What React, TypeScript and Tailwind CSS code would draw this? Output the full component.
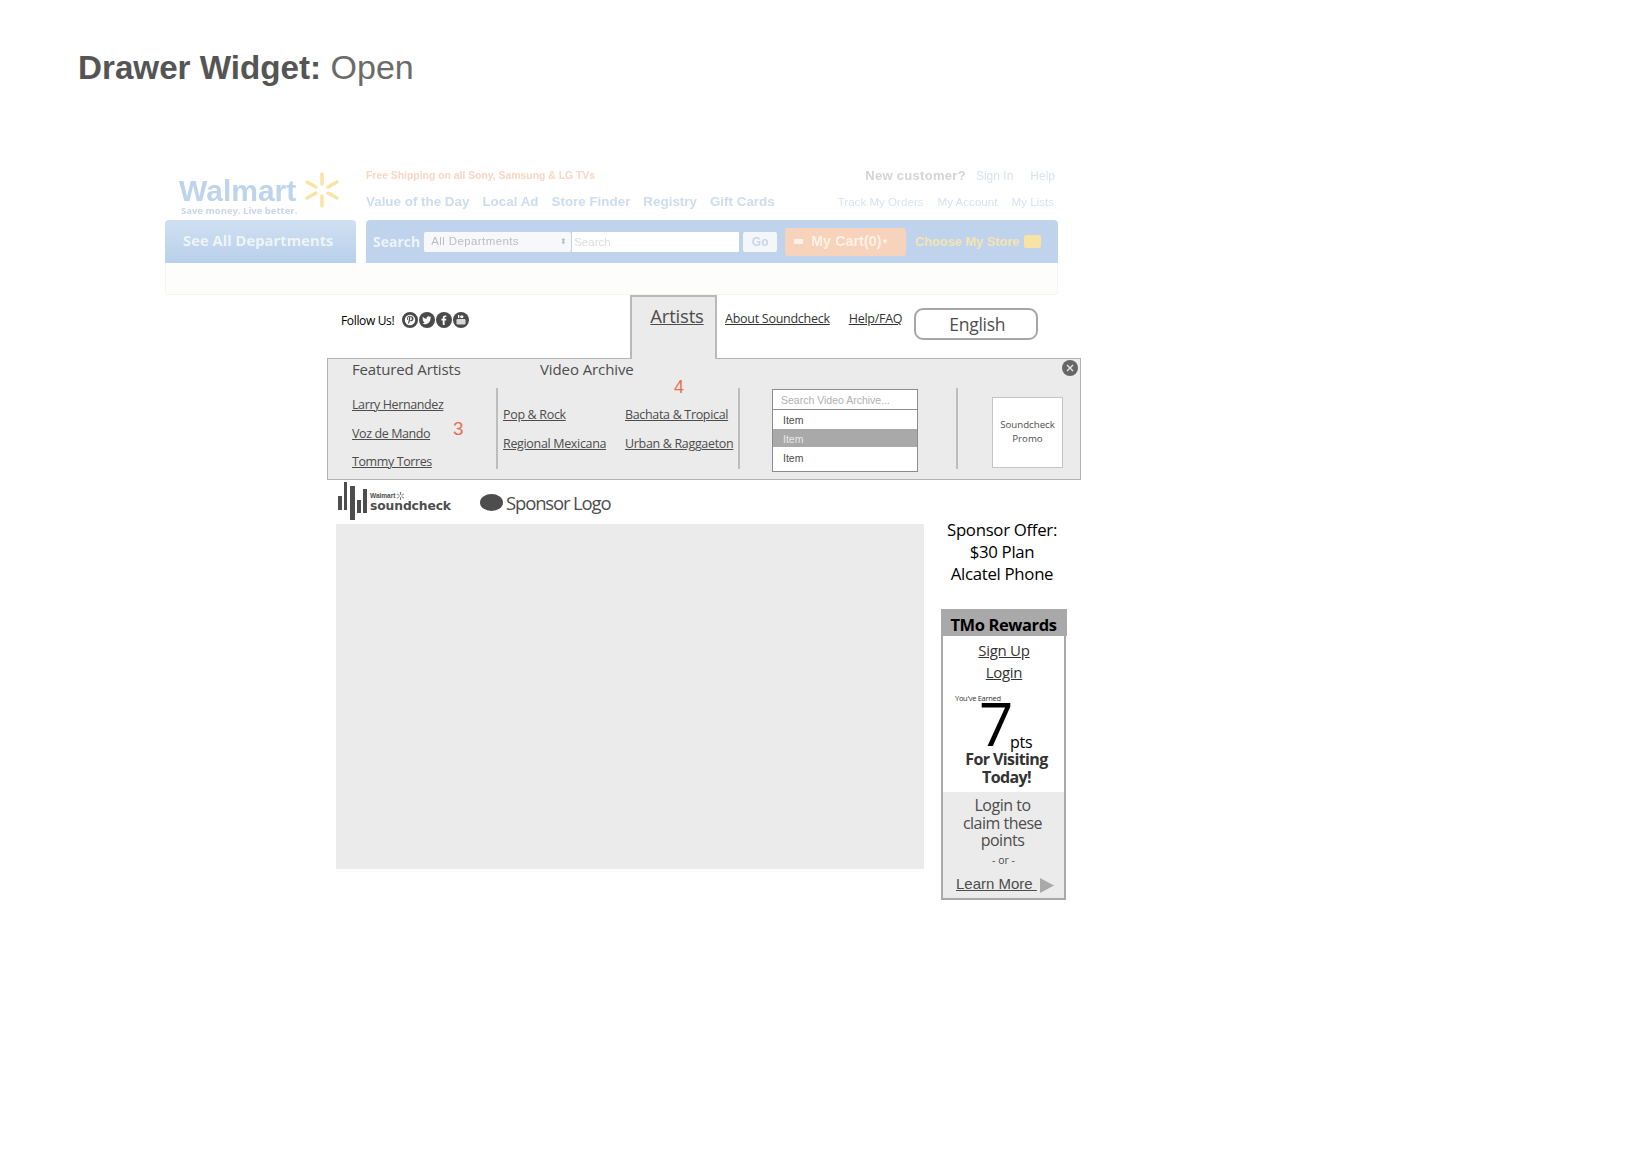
import React from 'react';

const myriad = "font-['Open_Sans',sans-serif]";

function WalmartHeader() {
  return (
    <div className="w-[895px] h-[130px] ml-[165px] font-['Liberation_Sans',sans-serif] blur-[0.6px]">
      <div className="flex h-[55px]">
        <div className="w-[201px] pl-[14px] pt-[7px] flex">
          <div className="w-[125px]">
            <div className="mt-[2px] text-[30px] leading-[33px] font-bold text-[#bdd4ec]">Walmart</div>
            <div className="text-[9.5px] leading-[8px] font-bold text-[#c9d7e6] ml-[2px] whitespace-nowrap font-['Open_Sans',sans-serif]">Save money. Live better.</div>
          </div>
          <svg className="mt-[0px]" width="36" height="36" viewBox="0 0 36 36">
            <g stroke="#f9e3a5" strokeWidth="3.5" strokeLinecap="round">
              <path d="M18 2v10" />
              <path d="M18 24v10" />
              <path d="M3 10l9 5" />
              <path d="M33 10l-9 5" />
              <path d="M3 26l9-5" />
              <path d="M33 26l-9-5" />
            </g>
          </svg>
        </div>
        <div className="flex-1">
          <div className="flex justify-between h-[22px] items-center pr-[5px]">
            <span className="text-[10.4px] font-bold text-[#fad6c3]">Free Shipping on all Sony, Samsung &amp; LG TVs</span>
            <div className="flex items-center text-[12px] text-[#d8e3ef] gap-[10px]">
              <span className="text-[13px] font-bold text-[#d4d4d4] tracking-[0.3px]">New customer?</span>
              <span>Sign In</span>
              <span className="ml-[7px]">Help</span>
            </div>
          </div>
          <div className="flex justify-between h-[30px] items-center pr-[6px]">
            <div className="flex gap-[13px] text-[13.4px] font-bold text-[#cddcee]">
              <span>Value of the Day</span>
              <span>Local Ad</span>
              <span>Store Finder</span>
              <span>Registry</span>
              <span>Gift Cards</span>
            </div>
            <div className="flex gap-[14px] text-[11.6px] text-[#d8e3ef]">
              <span>Track My Orders</span>
              <span>My Account</span>
              <span>My Lists</span>
            </div>
          </div>
        </div>
      </div>
      <div className="flex h-[43px] gap-[10px]">
        <div className="w-[191px] rounded-t-[4px] bg-gradient-to-b from-[#cfe0f2] to-[#b9d0ea] pl-[18px] pt-[10px] text-[14.8px] leading-[20px] font-bold text-[#eef4fa] font-['Open_Sans',sans-serif]">
          See All Departments
        </div>
        <div className="w-[692px] rounded-t-[4px] bg-[#bfd4ec] flex items-center pl-[7px]">
          <span className="text-[14px] font-bold text-[#eef4fa] font-['Open_Sans',sans-serif]">Search</span>
          <div className="ml-[4px] w-[147px] h-[20px] bg-[#f6f8fa] rounded-[2px] flex items-center justify-between pl-[7px] pr-[4px] text-[11.5px] tracking-[0.4px] text-[#bdbdbd]">
            <span>All Departments</span>
            <span className="text-[8px] leading-[8px]">⬍</span>
          </div>
          <div className="ml-[1px] w-[167px] h-[20px] bg-white pl-[2px] text-[11.5px] leading-[20px] text-[#dcdcdc]">Search</div>
          <div className="ml-[4px] w-[34px] h-[20px] bg-[#f4f7fa] rounded-[2px] text-center text-[12px] leading-[20px] font-bold text-[#c6d6e8]">Go</div>
          <div className="ml-[8px] w-[121px] h-[28px] bg-[#f8d3bb] rounded-[3px] flex items-center pl-[9px] text-[14px] font-bold text-[#fdf1e8] tracking-[0.2px]">
            <span className="w-[9px] h-[5px] bg-[#fdf1e8] mr-[8px]" />
            My Cart(0)
            <span className="text-[8px] ml-[1px]">▾</span>
          </div>
          <span className="ml-[9px] text-[12.8px] font-bold text-[#f7e4b0]">Choose My Store</span>
          <span className="ml-[4px] w-[17px] h-[13px] rounded-[2px] bg-[#f8e3a4]" />
        </div>
      </div>
      <div className="w-[893px] h-[32px] rounded-b-[3px] border border-t-0 border-[#f4f4f2] bg-[#fdfdfb]" />
    </div>
  );
}

function FollowIcons() {
  return (
    <div className="flex gap-[1px] ml-[8px]">
      {/* pinterest */}
      <svg width="16" height="16" viewBox="0 0 16 16">
        <circle cx="8" cy="8" r="6.6" fill="#fff" stroke="#4a4a4a" strokeWidth="2.8" />
        <path d="M8.200 3.800c-2.100 0-3.200 1.300-3.200 2.700 0 .8.300 1.400.9 1.700l.4-.9c-.3-.2-.4-.5-.4-.9 0-1 .8-1.700 2.100-1.700 1.100 0 1.800.7 1.800 1.700 0 1.200-.5 2-1.200 2-.5 0-.7-.3-.6-.8l.4-1.600c.1-.5-.2-.9-.6-.9-.5 0-.9.500-.9 1.200 0 .4.100.7.100.7l-1 4.200 1 .5 1-3c.2.300.6.600 1.100.6 1.500 0 2.400-1.300 2.400-2.900 0-1.400-1.200-2.400-3.100-2.400z" fill="#4a4a4a" />
      </svg>
      {/* twitter */}
      <svg width="16" height="16" viewBox="0 0 16 16">
        <circle cx="8" cy="8" r="8" fill="#4a4a4a" />
        <path d="M12.500 5.200c-.4.200-.7.300-1.100.3.400-.2.700-.6.800-1-.4.200-.8.400-1.200.5a2 2 0 0 0-3.400 1.800C6 6.700 4.700 6 3.800 4.800c-.5.900-.2 2 .6 2.600-.3 0-.6-.1-.9-.2 0 .9.700 1.800 1.600 2-.3.100-.6.100-.9 0 .3.800 1 1.300 1.900 1.400-.8.600-1.900.9-2.900.8 3.600 2 8.300-.2 8.300-5.500.4-.2.700-.5 1-.7z" fill="#fff" />
      </svg>
      {/* facebook */}
      <svg width="16" height="16" viewBox="0 0 16 16">
        <circle cx="8" cy="8" r="8" fill="#4a4a4a" />
        <path d="M8.600 13V8.500h1.500l.2-1.700H8.600V5.800c0-.5.200-.8.800-.8h.9V3.500c-.2 0-.7-.1-1.300-.1-1.300 0-2.200.8-2.200 2.200v1.200H5.400v1.700h1.400V13z" fill="#fff" />
      </svg>
      {/* youtube */}
      <svg width="16" height="16" viewBox="0 0 16 16">
        <circle cx="8" cy="8" r="8" fill="#4a4a4a" />
        <rect x="3.500" y="7" width="9" height="5.500" rx="1.200" fill="#d8d8d8" />
        <rect x="5" y="3" width="1.300" height="3" fill="#fff" />
        <rect x="7.300" y="3.500" width="3" height="2.500" rx=".8" fill="#fff" />
      </svg>
    </div>
  );
}

function NavRow() {
  return (
    <div className={`flex h-[63px] ml-[341px] ${myriad}`}>
      <div className="w-[289px] flex items-start pt-[17px]">
        <span className="text-[12px] leading-[17px] tracking-[-0.35px] text-black">Follow Us!</span>
        <FollowIcons />
      </div>
      <div className="w-[87px] h-[64px] bg-[#ebebeb] border-2 border-b-0 border-[#b9b9b9] text-center pt-[6px] pl-[7px] z-10">
        <a className="text-[18.5px] leading-[26px] font-medium tracking-[-0.2px] text-[#4d4d4d] underline">Artists</a>
      </div>
      <div className="flex items-start pt-[15px] text-[#333] text-[12.5px] leading-[18px] tracking-[-0.27px]">
        <a className="ml-[8px] underline">About Soundcheck</a>
        <a className="ml-[19px] underline">Help/FAQ</a>
      </div>
      <div className="ml-[12px] mt-[13px] w-[124px] h-[32px] rounded-[9px] border-2 border-[#a6a6a6] bg-white text-center text-[17.5px] leading-[28px] tracking-[-0.3px] text-[#4d4d4d]">
        <span className="ml-[2px]">English</span>
      </div>
    </div>
  );
}

function SearchPanel() {
  return (
    <div className="w-[146px] mt-[30px] font-['Liberation_Sans',sans-serif] text-[10.5px]">
      <div className="h-[21px] border border-[#8c8c8c] bg-white pl-[8px] leading-[21px] text-[#b0b0b0]">Search Video Archive...</div>
      <div className="h-[62px] border border-t-0 border-[#8c8c8c] bg-white text-[#4d4d4d] leading-[19px]">
        <div className="h-[19px] pl-[10px] pt-[1px]">Item</div>
        <div className="h-[18px] pl-[10px] pt-[1px] bg-[#a9a9a9] text-[#e8e8e8]">Item</div>
        <div className="h-[19px] pl-[10px] pt-[2px]">Item</div>
      </div>
    </div>
  );
}

function Drawer() {
  return (
    <div className={`relative flex w-[754px] h-[122px] ml-[327px] bg-[#ebebeb] border border-[#b3b3b3] ${myriad} text-[#4d4d4d]`}>
      <div className="w-[168px] pl-[24px] -mt-[1px]">
        <div className="text-[15px] leading-[22px] tracking-[-0.15px] whitespace-nowrap">Featured Artists</div>
        <div className="mt-[16px] flex flex-col gap-[10.5px] text-[12.5px] leading-[18px] tracking-[-0.4px]">
          <a className="underline">Larry Hernandez</a>
          <a className="underline">Voz de Mando</a>
          <a className="underline">Tommy Torres</a>
        </div>
      </div>
      <div className="w-[2px] h-[81px] mt-[29px] bg-[#bdbdbd]" />
      <div className="w-[240px] pl-[5px] -mt-[1px]">
        <div className="ml-[37px] text-[15px] leading-[22px] tracking-[-0.1px]">Video Archive</div>
        <div className="mt-[26px] grid grid-cols-[122px_1fr] gap-y-[11px] text-[12.5px] leading-[18px] tracking-[-0.33px] whitespace-nowrap">
          <a className="underline">Pop &amp; Rock</a>
          <a className="underline">Bachata &amp; Tropical</a>
          <a className="underline">Regional Mexicana</a>
          <a className="underline">Urban &amp; Raggaeton</a>
        </div>
      </div>
      <div className="w-[2px] h-[81px] mt-[29px] bg-[#bdbdbd]" />
      <div className="ml-[32px]"><SearchPanel /></div>
      <div className="ml-[38px] w-[2px] h-[81px] mt-[29px] bg-[#bdbdbd]" />
      <div className="ml-[34px] mt-[38px] w-[71px] h-[71px] pb-[1px] bg-white border border-[#c4c4c4] flex items-center justify-center text-center text-[9.7px] leading-[14px] text-[#4d4d4d]">
        <span>Soundcheck<br />Promo</span>
      </div>
      <span className="absolute left-[125px] top-[60px] font-['Liberation_Sans',sans-serif] text-[19px] leading-[20px] text-[#e8704f]">3</span>
      <span className="absolute left-[346px] top-[18px] font-['Liberation_Sans',sans-serif] text-[18px] leading-[20px] text-[#e8704f]">4</span>
      <div className="absolute right-[2px] top-[1px] w-[16px] h-[16px] rounded-full bg-[#666] flex items-center justify-center">
        <svg width="10" height="10" viewBox="0 0 10 10"><path d="M2 2l6 6M8 2l-6 6" stroke="#e8e8e8" strokeWidth="1.4" /></svg>
      </div>
    </div>
  );
}

function LogoRow() {
  return (
    <div className={`flex h-[44px] ml-[338px] items-center ${myriad}`}>
      <svg className="-mt-[2px]" width="30" height="38" viewBox="0 0 30 38" fill="#4d4d4d">
        <rect x="0" y="14" width="4" height="14" />
        <rect x="6" y="0" width="3" height="28" />
        <rect x="12" y="4" width="5" height="34" />
        <rect x="19" y="18" width="4" height="13" />
        <rect x="25" y="7" width="4" height="24" />
      </svg>
      <div className="ml-[2px] w-[83px] font-['DejaVu_Sans',sans-serif] text-[#4d4d4d]">
        <div className="flex items-center text-[6.5px] leading-[8px] font-['Liberation_Sans',sans-serif] font-bold">
          Walmart
          <svg className="ml-[1px]" width="9" height="8" viewBox="0 0 10 10">
            <path d="M5 0v3.500M5 6.500V10M0.700 2.500l3 1.700M9.300 2.500l-3 1.700M0.700 7.500l3-1.700M9.300 7.500l-3-1.700" stroke="#4d4d4d" strokeWidth=".9" />
          </svg>
        </div>
        <div className="text-[12.3px] leading-[13px] font-bold tracking-[-0.1px]">soundcheck</div>
      </div>
      <span className="ml-[27px] w-[23px] h-[17px] rounded-[50%] bg-[#4d4d4d]" />
      <span className="ml-[3px] mt-[1px] text-[18.5px] leading-[26px] tracking-[-1.15px] text-[#4d4d4d]">Sponsor Logo</span>
    </div>
  );
}

function Rewards() {
  return (
    <div className="w-[125px] h-[291px] ml-[17px] mt-[24px] border-[2.5px] border-t-0 border-[#a9a9a9] bg-white flex flex-col text-center">
      <div className="h-[27px] -mx-[2.5px] bg-[#a9a9a9] text-[16.5px] leading-[32px] font-bold tracking-[-0.4px] text-black whitespace-nowrap">TMo Rewards</div>
      <a className="mt-[3px] ml-[1px] text-[15px] leading-[22px] tracking-[-0.3px] text-[#333] underline">Sign Up</a>
      <a className="ml-[1px] text-[15px] leading-[22px] tracking-[-0.3px] text-[#333] underline">Login</a>
      <div className="mt-[10px] pl-[12px] text-left text-[7.5px] leading-[10px] tracking-[-0.3px] text-[#333]">You've Earned</div>
      <div className="flex items-end ml-[36px] h-[41px] text-left text-black">
        <span className="text-[60px] leading-[41px] w-[31px]">7</span>
        <span className="text-[16px] leading-[16px] -mb-[6px] tracking-[-0.3px]">pts</span>
      </div>
      <div className="mt-[6px] ml-[6px] text-[16px] leading-[18px] font-bold tracking-[-0.6px] text-[#333]">For Visiting<br />Today!</div>
      <div className="mt-[6px] flex-1 bg-[#ebebeb] pt-[5px] text-[#4d4d4d]">
        <div className="-ml-[2px] text-[16px] leading-[17.5px] tracking-[-0.5px]">Login to<br />claim these<br />points</div>
        <div className="mt-[3px] text-[10.5px] leading-[14px]">- or -</div>
        <div className="mt-[7px] flex items-center pl-[13px] font-['Liberation_Sans',sans-serif] text-[15px] leading-[20px]">
          <a className="underline whitespace-pre">Learn More </a>
          <svg className="ml-[3px] mt-[3px]" width="14" height="15" viewBox="0 0 14 15"><path d="M0 0l14 7.500L0 15z" fill="#a9a9a9" /></svg>
        </div>
      </div>
    </div>
  );
}

function ContentRow() {
  return (
    <div className={`flex ml-[336px] ${myriad}`}>
      <div className="w-[588px] h-[345px] bg-[#ebebeb]" />
      <div className="w-[160px]">
        <div className="-mt-[5px] -ml-[4px] text-center text-[16.8px] leading-[22px] tracking-[-0.3px] text-black">
          Sponsor Offer:<br />$30 Plan<br />Alcatel Phone
        </div>
        <Rewards />
      </div>
    </div>
  );
}

export default function App() {
  return (
    <div className="w-[1650px] h-[1167px] bg-white overflow-hidden">
      <h1 className="pt-[47px] pl-[78px] h-[165px] font-['Liberation_Sans',sans-serif] text-[34px] leading-[40px] text-[#555]">
        <span className="font-bold text-[33.2px]">Drawer Widget:</span> <span className="font-normal text-[#6b6b6b]">Open</span>
      </h1>
      <WalmartHeader />
      <NavRow />
      <Drawer />
      <LogoRow />
      <ContentRow />
    </div>
  );
}
